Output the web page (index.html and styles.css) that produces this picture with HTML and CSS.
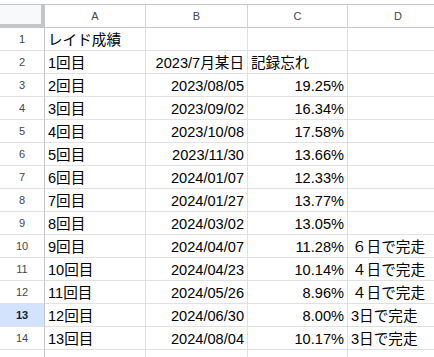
FILE: index.html
```html
<!DOCTYPE html>
<html lang="ja">
<head>
    <meta charset="UTF-8">
    <meta name="viewport" content="width=device-width, initial-scale=1.0">
    <title>レイド成績</title>
    <link rel="stylesheet" href="styles.css">
</head>
<body>
    <div class="sheet">
        <table class="grid">
            <colgroup>
                <col class="w-head">
                <col class="w-a">
                <col class="w-b">
                <col class="w-c">
                <col class="w-d">
            </colgroup>
            <tr class="col-heads">
                <th class="corner"></th>
                <th>A</th>
                <th>B</th>
                <th>C</th>
                <th>D</th>
            </tr>
            <tr><th class="row-head">1</th><td>レイド成績</td><td></td><td></td><td></td></tr>
            <tr><th class="row-head">2</th><td>1回目</td><td class="num">2023/7月某日</td><td>記録忘れ</td><td></td></tr>
            <tr><th class="row-head">3</th><td>2回目</td><td class="num">2023/08/05</td><td class="num">19.25%</td><td></td></tr>
            <tr><th class="row-head">4</th><td>3回目</td><td class="num">2023/09/02</td><td class="num">16.34%</td><td></td></tr>
            <tr><th class="row-head">5</th><td>4回目</td><td class="num">2023/10/08</td><td class="num">17.58%</td><td></td></tr>
            <tr><th class="row-head">6</th><td>5回目</td><td class="num">2023/11/30</td><td class="num">13.66%</td><td></td></tr>
            <tr><th class="row-head">7</th><td>6回目</td><td class="num">2024/01/07</td><td class="num">12.33%</td><td></td></tr>
            <tr><th class="row-head">8</th><td>7回目</td><td class="num">2024/01/27</td><td class="num">13.77%</td><td></td></tr>
            <tr><th class="row-head">9</th><td>8回目</td><td class="num">2024/03/02</td><td class="num">13.05%</td><td></td></tr>
            <tr><th class="row-head">10</th><td>9回目</td><td class="num">2024/04/07</td><td class="num">11.28%</td><td class="note">６日で完走</td></tr>
            <tr><th class="row-head">11</th><td>10回目</td><td class="num">2024/04/23</td><td class="num">10.14%</td><td class="note">４日で完走</td></tr>
            <tr><th class="row-head">12</th><td>11回目</td><td class="num">2024/05/26</td><td class="num">8.96%</td><td class="note">４日で完走</td></tr>
            <tr class="selected"><th class="row-head">13</th><td>12回目</td><td class="num">2024/06/30</td><td class="num">8.00%</td><td>3日で完走</td></tr>
            <tr><th class="row-head">14</th><td>13回目</td><td class="num">2024/08/04</td><td class="num">10.17%</td><td>3日で完走</td></tr>
            <tr><th class="row-head">15</th><td></td><td></td><td></td><td></td></tr>
        </table>
    </div>
</body>
</html>
```

FILE: styles.css
```css
/* spreadsheet view */
html, body {
    margin: 0;
    padding: 0;
    background: #ffffff;
    overflow: hidden;
}

.sheet {
    width: 434px;
    height: 357px;
    padding-top: 4px;
    overflow: hidden;
    box-sizing: border-box;
}

.grid {
    border-collapse: separate;
    border-spacing: 0;
    table-layout: fixed;
    width: 449px;
    border-top: 1px solid #c4c7c5;
    font-family: "Liberation Sans", Arial, "Noto Sans CJK JP", sans-serif;
    font-size: 14.6px;
    color: #000000;
}

.w-head { width: 45px; }
.w-a { width: 101px; }
.w-b { width: 102px; }
.w-c { width: 100px; }
.w-d { width: 101px; }

tr {
    height: 23px;
}

th, td {
    box-sizing: border-box;
    height: 23px;
    padding: 0;
    border-right: 1px solid #e1e1e1;
    border-bottom: 1px solid #e1e1e1;
    white-space: nowrap;
    overflow: hidden;
}

td {
    padding: 0 3px 1px 3px;
    line-height: 17px;
    vertical-align: bottom;
    text-align: left;
}

td.num {
    text-align: right;
}

td.note {
    padding-left: 4px;
}

.col-heads th {
    font-family: "Liberation Sans", Arial, sans-serif;
    font-size: 11px;
    font-weight: normal;
    color: #444746;
    text-align: center;
    vertical-align: middle;
    border-right-color: #d3d3d3;
    border-bottom-color: #c4c7c5;
}

.col-heads th.corner {
    background: #f8f9fa;
    border-right: 1px solid #c4c7c5;
    border-bottom: 1px solid #c4c7c5;
    box-shadow: inset -3px -3px 0 #c4c7c5;
}

.row-head {
    font-family: "Liberation Sans", Arial, sans-serif;
    font-size: 11px;
    font-weight: normal;
    color: #444746;
    text-align: center;
    vertical-align: middle;
    border-right-color: #c4c7c5;
}

.selected .row-head {
    background: #d3e3fd;
    color: #0b1f45;
    font-weight: bold;
}
```
